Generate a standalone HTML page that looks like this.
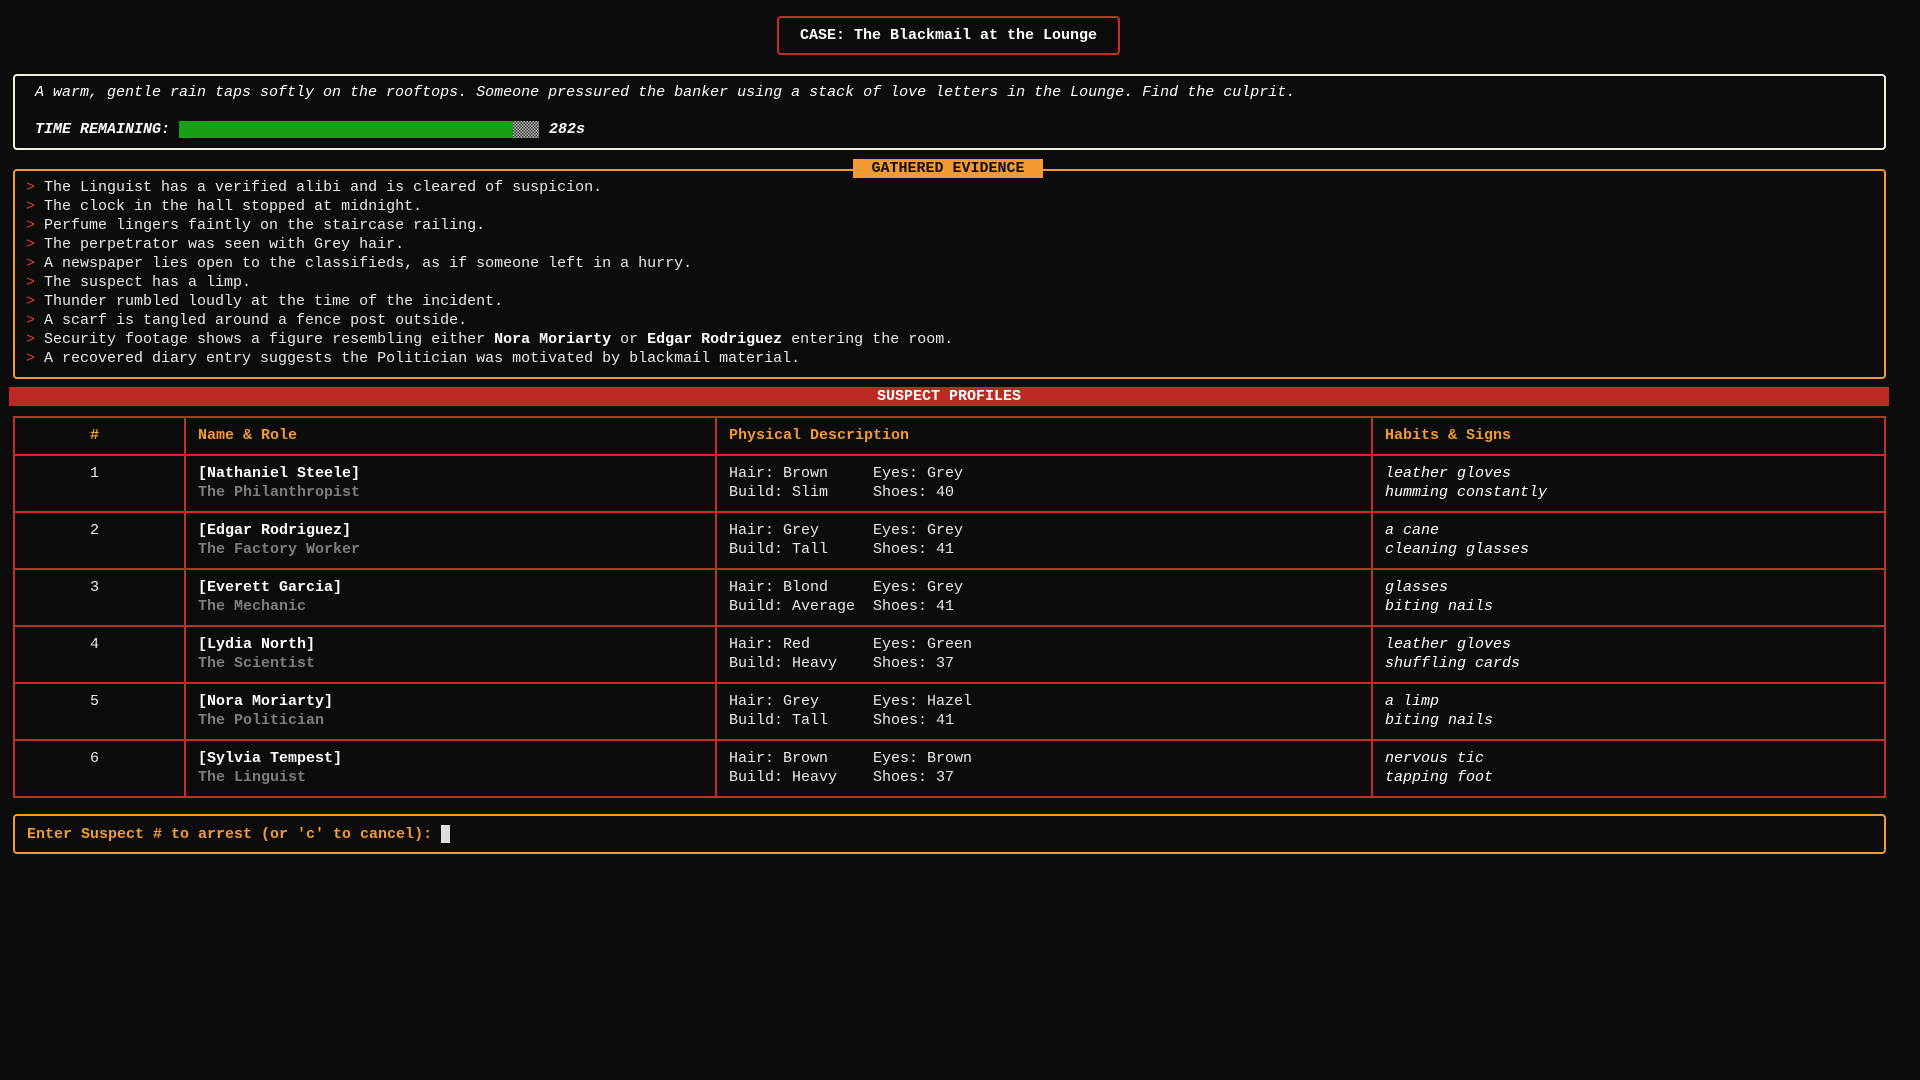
<!DOCTYPE html>
<html><head><meta charset="utf-8"><style>
*{margin:0;padding:0;box-sizing:border-box}
body{width:1920px;height:1080px;background:#0c0c0c;color:#e8e8e8;font-family:"Liberation Mono","DejaVu Sans Mono",monospace;font-size:15px;letter-spacing:0;overflow:hidden;position:relative}
.a{position:absolute;white-space:pre}
.case{left:777px;top:16px;width:343px;height:39px;border:2px solid #c0302a;border-radius:4px;text-align:center;line-height:35px;font-weight:bold;color:#fff}
.desc{left:13px;top:74px;width:1873px;height:76px;border:2px solid #f4ede4;border-radius:4px}
.ev{left:13px;top:169px;width:1873px;height:210px;border:2px solid #f39a32;border-radius:4px}
.evt{left:853px;top:159px;width:190px;height:19px;background:#f39a32;color:#111;text-align:center;line-height:19px;font-weight:bold;font-size:15px}
.el{left:26px;line-height:19px}
.el b{color:#fff}
.gt{color:#e03a2a}
.bar{left:9px;top:387px;width:1880px;height:19px;background:#bd2a24;color:#fff;font-weight:bold;text-align:center;line-height:19px;font-size:15px}
table{position:absolute;left:13px;top:416px;width:1873px;border-collapse:collapse;border:2px solid #c0302a}
td,th{border:2px solid #c0302a;vertical-align:top;text-align:left;line-height:19px}
th{height:38px;color:#f39a32;font-weight:bold;padding:8px 0 0 12px}
td{height:57px;padding:8px 0 0 12px}
td.n,th.n{text-align:center;padding-left:0;padding-right:10px}
.nm{font-weight:bold;color:#fff}
.rl{font-weight:bold;color:#7d7d7d}
.ph span{display:inline-block;width:144px}
.hb{font-style:italic;color:#fff}
.pr{left:13px;top:814px;width:1873px;height:40px;border:2px solid #f39a32;border-radius:4px;color:#f39a32;font-weight:bold;line-height:37px;padding-left:12px}
.cur{display:inline-block;width:9px;height:18px;background:#ddd;vertical-align:middle;margin-left:9px}
</style></head><body>
<div class="a case">CASE: The Blackmail at the Lounge</div>
<div class="a desc"></div>
<div class="a" style="left:35px;top:83px;font-style:italic;color:#fff;line-height:20px">A warm, gentle rain taps softly on the rooftops. Someone pressured the banker using a stack of love letters in the Lounge. Find the culprit.</div>
<div class="a" style="left:35px;top:120px;font-style:italic;font-weight:bold;color:#fff;line-height:20px">TIME REMAINING:</div>
<div class="a" style="left:179px;top:121px;width:334px;height:17px;background:#18a014"></div>
<div class="a" style="left:513px;top:121px;width:26px;height:17px;background:repeating-conic-gradient(#bbb 0 25%,#333 0 50%) 0 0/3px 3px"></div>
<div class="a" style="left:549px;top:120px;font-style:italic;font-weight:bold;color:#fff;line-height:20px">282s</div>
<div class="a ev"></div>
<div class="a evt">GATHERED EVIDENCE</div>
<div class="a el" style="top:178px"><span class="gt">&gt;</span> The Linguist has a verified alibi and is cleared of suspicion.</div>
<div class="a el" style="top:197px"><span class="gt">&gt;</span> The clock in the hall stopped at midnight.</div>
<div class="a el" style="top:216px"><span class="gt">&gt;</span> Perfume lingers faintly on the staircase railing.</div>
<div class="a el" style="top:235px"><span class="gt">&gt;</span> The perpetrator was seen with Grey hair.</div>
<div class="a el" style="top:254px"><span class="gt">&gt;</span> A newspaper lies open to the classifieds, as if someone left in a hurry.</div>
<div class="a el" style="top:273px"><span class="gt">&gt;</span> The suspect has a limp.</div>
<div class="a el" style="top:292px"><span class="gt">&gt;</span> Thunder rumbled loudly at the time of the incident.</div>
<div class="a el" style="top:311px"><span class="gt">&gt;</span> A scarf is tangled around a fence post outside.</div>
<div class="a el" style="top:330px"><span class="gt">&gt;</span> Security footage shows a figure resembling either <b>Nora Moriarty</b> or <b>Edgar Rodriguez</b> entering the room.</div>
<div class="a el" style="top:349px"><span class="gt">&gt;</span> A recovered diary entry suggests the Politician was motivated by blackmail material.</div>
<div class="a bar">SUSPECT PROFILES</div>
<table>
<tr><th class="n" style="width:171px">#</th><th style="width:531px">Name &amp; Role</th><th style="width:656px">Physical Description</th><th>Habits &amp; Signs</th></tr>
<tr><td class="n">1</td><td><div class="nm">[Nathaniel Steele]</div><div class="rl">The Philanthropist</div></td><td class="ph"><span>Hair: Brown</span>Eyes: Grey<br><span>Build: Slim</span>Shoes: 40</td><td class="hb">leather gloves<br>humming constantly</td></tr>
<tr><td class="n">2</td><td><div class="nm">[Edgar Rodriguez]</div><div class="rl">The Factory Worker</div></td><td class="ph"><span>Hair: Grey</span>Eyes: Grey<br><span>Build: Tall</span>Shoes: 41</td><td class="hb">a cane<br>cleaning glasses</td></tr>
<tr><td class="n">3</td><td><div class="nm">[Everett Garcia]</div><div class="rl">The Mechanic</div></td><td class="ph"><span>Hair: Blond</span>Eyes: Grey<br><span>Build: Average</span>Shoes: 41</td><td class="hb">glasses<br>biting nails</td></tr>
<tr><td class="n">4</td><td><div class="nm">[Lydia North]</div><div class="rl">The Scientist</div></td><td class="ph"><span>Hair: Red</span>Eyes: Green<br><span>Build: Heavy</span>Shoes: 37</td><td class="hb">leather gloves<br>shuffling cards</td></tr>
<tr><td class="n">5</td><td><div class="nm">[Nora Moriarty]</div><div class="rl">The Politician</div></td><td class="ph"><span>Hair: Grey</span>Eyes: Hazel<br><span>Build: Tall</span>Shoes: 41</td><td class="hb">a limp<br>biting nails</td></tr>
<tr><td class="n">6</td><td><div class="nm">[Sylvia Tempest]</div><div class="rl">The Linguist</div></td><td class="ph"><span>Hair: Brown</span>Eyes: Brown<br><span>Build: Heavy</span>Shoes: 37</td><td class="hb">nervous tic<br>tapping foot</td></tr>
</table>
<div class="a pr">Enter Suspect # to arrest (or 'c' to cancel):<span class="cur"></span></div>
</body></html>
